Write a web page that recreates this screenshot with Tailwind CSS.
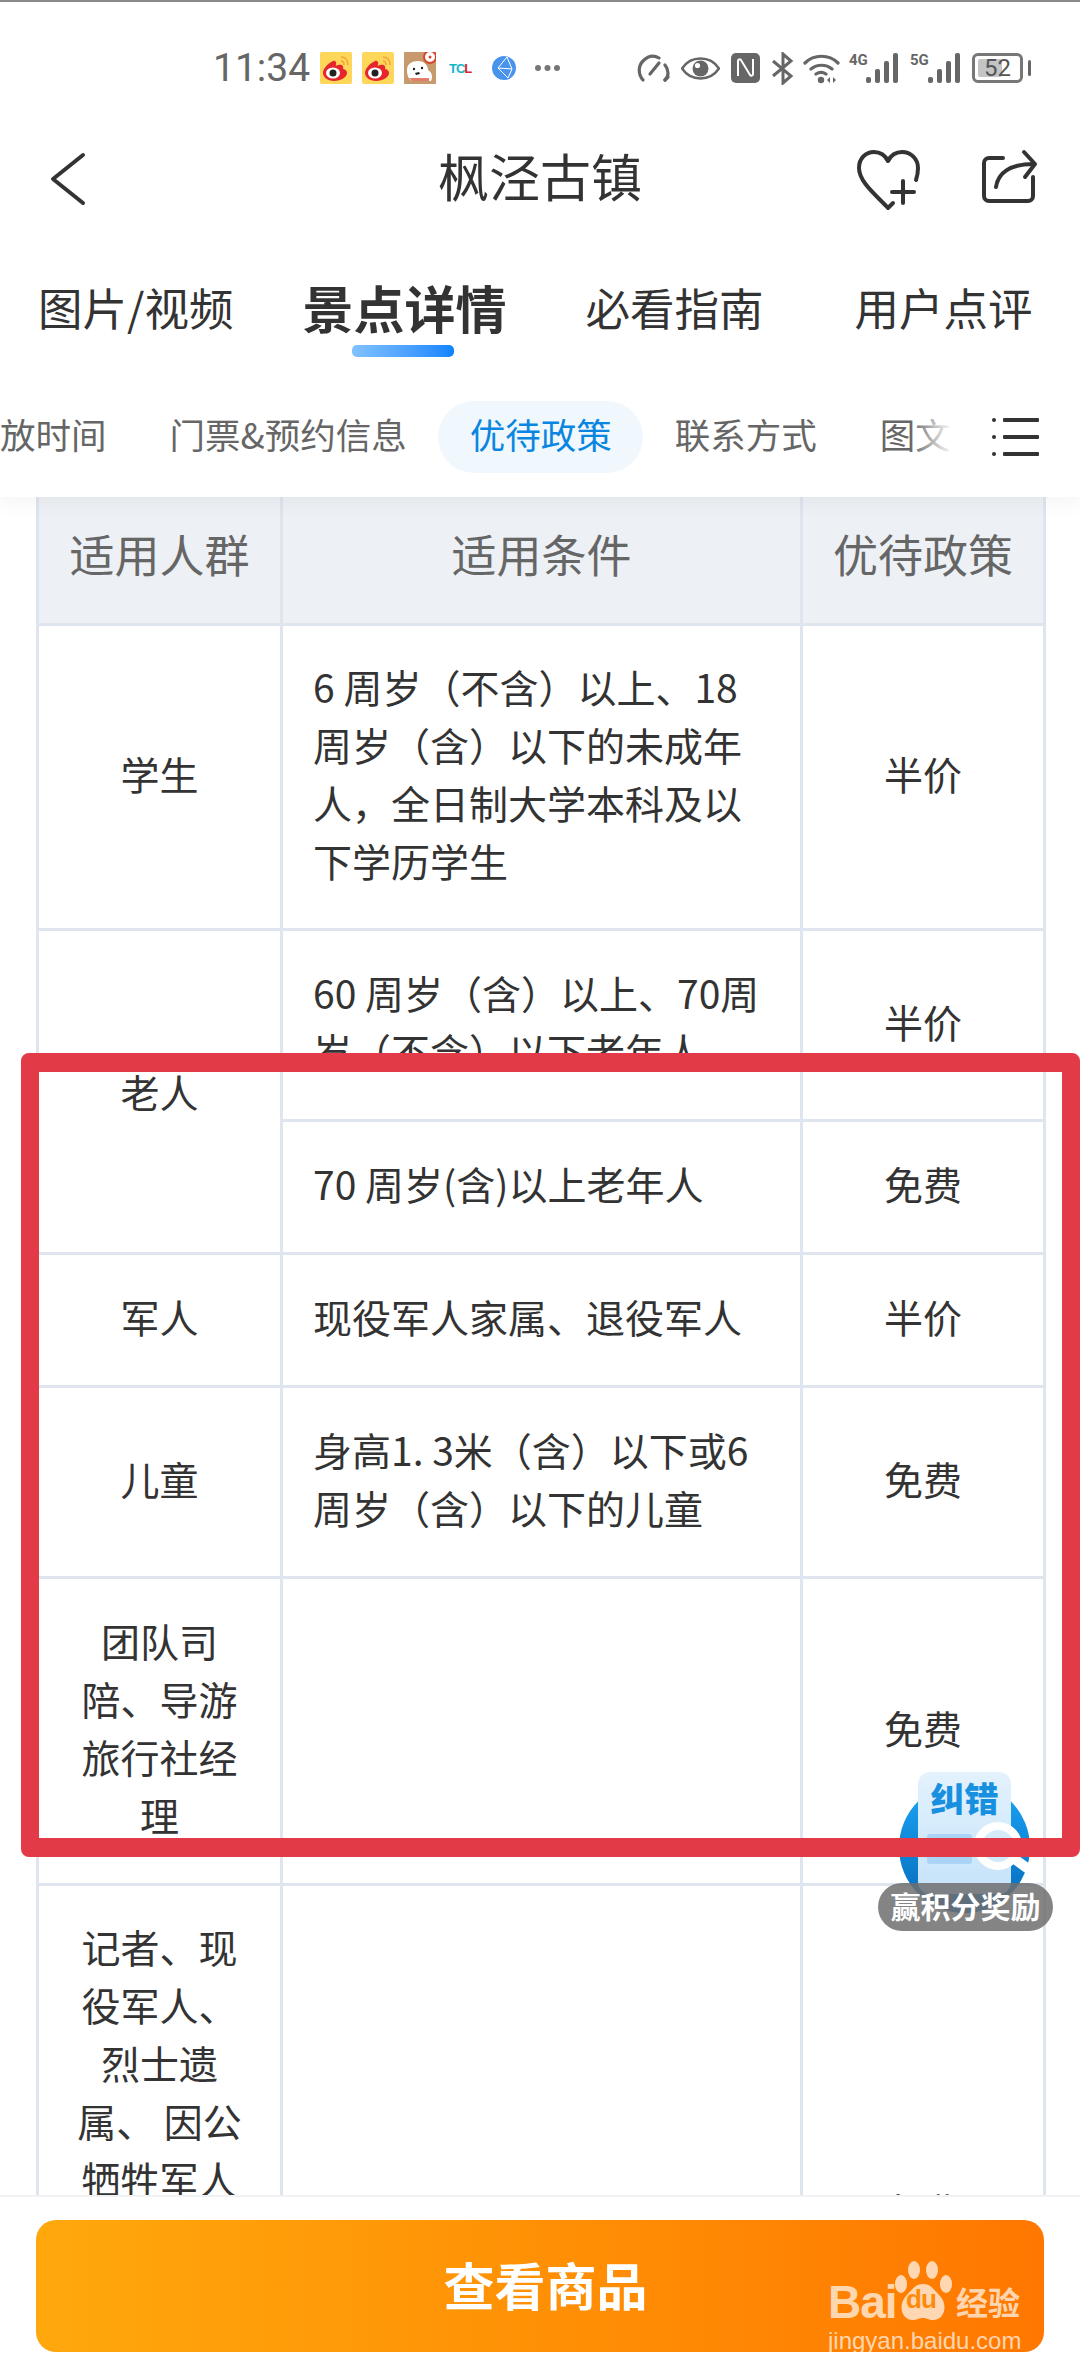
<!DOCTYPE html>
<html lang="zh-CN">
<head>
    <meta charset="UTF-8">
    <meta name="viewport" content="width=device-width, initial-scale=1.0">
    <title>枫泾古镇</title>
    <script src="https://cdn.jsdelivr.net/npm/@tailwindcss/browser@4"></script>
</head>
<body class="bg-white">
<div class="relative w-[1080px] h-[2376px] overflow-hidden flex flex-col bg-white text-[#333] font-['Noto_Sans_CJK_SC','Noto_Sans',sans-serif]">

    <!-- header -->
    <header class="relative z-10 h-[497px] shrink-0 bg-white shadow-[0_8px_18px_rgba(0,0,0,0.04)]">
        <div class="h-[2px] bg-[#8a8a8a]"></div>

        <!-- status bar -->
        <div class="h-[132px] flex items-center text-[#666]">
            <span class="ml-[213px] w-[107px] text-[39px] leading-none font-['Roboto',sans-serif]">11:34</span>
            <svg class="w-[32px] h-[32px]" viewBox="0 0 32 32"><rect width="32" height="32" rx="2" fill="#fdd65a"/><path d="M13 9C7 12 3 17 3 21c0 5 6 8 11 8 7 0 13-4 13-8 0-3-3-4-4-4 1-3-1-5-5-4-2 1-3 1-2 0 1-3-1-5-3-4z" fill="#e6262c"/><ellipse cx="13" cy="21" rx="7" ry="5.5" fill="#fff"/><circle cx="13" cy="21" r="3.5" fill="#222"/><path d="M21 5c4 0 7 3 7 8M21 9c2 0 3 2 3 4" fill="none" stroke="#f2a33a" stroke-width="1.6"/></svg>
            <svg class="ml-[10px] w-[32px] h-[32px]" viewBox="0 0 32 32"><rect width="32" height="32" rx="2" fill="#fdd65a"/><path d="M13 9C7 12 3 17 3 21c0 5 6 8 11 8 7 0 13-4 13-8 0-3-3-4-4-4 1-3-1-5-5-4-2 1-3 1-2 0 1-3-1-5-3-4z" fill="#e6262c"/><ellipse cx="13" cy="21" rx="7" ry="5.5" fill="#fff"/><circle cx="13" cy="21" r="3.5" fill="#222"/><path d="M21 5c4 0 7 3 7 8M21 9c2 0 3 2 3 4" fill="none" stroke="#f2a33a" stroke-width="1.6"/></svg>
            <svg class="ml-[10px] w-[32px] h-[32px]" viewBox="0 0 32 32"><rect width="32" height="32" fill="#c69a6c"/><circle cx="26" cy="5" r="6" fill="#fff" stroke="#d8452e" stroke-width="2"/><circle cx="26" cy="5" r="1.5" fill="#d8452e"/><path d="M3 18c0-6 5-9 11-9s10 4 10 9c4 2 5 7 3 11H8c-4-2-5-7-5-11z" fill="#fff"/><circle cx="10" cy="17" r="1.2" fill="#222"/><circle cx="18" cy="16" r="1.2" fill="#222"/><path d="M11 21l4-1 1 2-4 1z" fill="#222"/><path d="M5 26h20v3H8z" fill="#d8452e" opacity=".7"/></svg>
            <span class="ml-[13px] w-[30px] text-[13px] leading-none font-black tracking-[-1px] font-['Liberation_Sans',sans-serif] text-[#12b5c9]">TC<span class="text-[#e0202c]">L</span></span>
            <svg class="ml-[13px] w-[24px] h-[24px]" viewBox="0 0 24 24"><circle cx="12" cy="12" r="12" fill="#4a93ec"/><path d="M15 1L6 12l10 10M6 12l14 1M15 1l5 12-4 9" fill="none" stroke="#fff" stroke-width="1"/></svg>
            <svg class="ml-[19px] w-[25px] h-[6px]" viewBox="0 0 25 6"><circle cx="3" cy="3" r="3" fill="#777"/><circle cx="12.5" cy="3" r="3" fill="#777"/><circle cx="22" cy="3" r="3" fill="#777"/></svg>

            <svg class="ml-[77px] w-[33px] h-[28px]" viewBox="0 0 33 28" fill="none" stroke="#666" stroke-width="3.2" stroke-linecap="round"><path d="M6 26C1 20 1 12 6 7c5-5 11-6 16-3"/><path d="M28 11c4 5 4 11 0 15"/><path d="M13 20l9-11"/><path d="M28 26l3-3"/></svg>
            <svg class="ml-[11px] w-[39px] h-[23px]" viewBox="0 0 39 23"><path d="M1 11.5C6 4 12 1.500 19.500 1.500S33 4 38 11.500C33 19 27 21.500 19.500 21.500S6 19 1 11.500z" fill="none" stroke="#666" stroke-width="2.600"/><circle cx="19.500" cy="11.500" r="8" fill="#666"/><circle cx="16.500" cy="8.500" r="2.600" fill="#fff"/></svg>
            <svg class="ml-[11px] w-[29px] h-[30px]" viewBox="0 0 29 30"><rect width="29" height="30" rx="5" fill="#666"/><path d="M7 23V8c0-2 2-2 3-1l9 15c1 1 3 1 3-1V6" fill="none" stroke="#fff" stroke-width="2"/></svg>
            <svg class="ml-[11px] w-[24px] h-[33px]" viewBox="0 0 24 33" fill="none" stroke="#666" stroke-width="3"><path d="M2 9l18 15-8 7V2l8 7L2 24"/></svg>
            <svg class="ml-[8px] w-[37px] h-[31px]" viewBox="0 0 37 31"><path d="M2 10c9-9 24-9 33 0M8 16c6-5 15-5 21 0M13 21c3-2 7-2 10 0" fill="none" stroke="#666" stroke-width="3.200" stroke-linecap="round"/><circle cx="18" cy="27" r="3.200" fill="#666"/><path d="M27 24l-3 3 3 3zM30 24l3 3-3 3z" fill="#666"/></svg>
            <div class="relative ml-[9px] w-[49px] h-[30px]">
                <span class="absolute left-0 top-0 text-[15px] leading-none font-bold font-['Roboto',sans-serif]">4G</span>
                <svg class="absolute right-0 bottom-0 w-[32px] h-[30px]" viewBox="0 0 32 30" fill="#666"><rect x="0" y="24" width="5" height="6" rx="2"/><rect x="9" y="16" width="5" height="14" rx="2"/><rect x="18" y="8" width="5" height="22" rx="2"/><rect x="27" y="0" width="5" height="30" rx="2"/></svg>
            </div>
            <div class="relative ml-[12px] w-[50px] h-[30px]">
                <span class="absolute left-0 top-0 text-[15px] leading-none font-bold font-['Roboto',sans-serif]">5G</span>
                <svg class="absolute right-0 bottom-0 w-[32px] h-[30px]" viewBox="0 0 32 30" fill="#666"><rect x="0" y="24" width="5" height="6" rx="2"/><rect x="9" y="16" width="5" height="14" rx="2"/><rect x="18" y="8" width="5" height="22" rx="2"/><rect x="27" y="0" width="5" height="30" rx="2"/></svg>
            </div>
            <div class="relative ml-[12px] w-[51px] h-[30px] rounded-[6px] border-[3px] border-[#777] flex items-center justify-center overflow-hidden">
                <div class="absolute left-[3px] top-[3px] bottom-[3px] w-[24px] bg-[#c4c4c4] rounded-[2px]"></div>
                <span class="relative text-[24px] leading-none font-['Roboto',sans-serif] text-[#555]">52</span>
            </div>
            <div class="ml-[5px] w-[3px] h-[16px] bg-[#666] rounded-full"></div>
        </div>

        <!-- nav -->
        <div class="relative h-[88px] flex items-center justify-center">
            <svg class="absolute left-[50px] top-[18px] w-[36px] h-[54px]" viewBox="0 0 36 54" fill="none" stroke="#333" stroke-width="4" stroke-linecap="round" stroke-linejoin="round"><path d="M33 3L3 27l30 24"/></svg>
            <h1 class="text-[51px] leading-none font-normal pb-[5px]">枫泾古镇</h1>
            <svg class="absolute left-[856px] top-[15px] w-[66px] h-[62px]" viewBox="0 0 66 62" fill="none" stroke="#333" stroke-width="4" stroke-linecap="round" stroke-linejoin="round"><path d="M37 54l-5 5C20 46 3 33 3 19 3 9 10 3 18 3c6 0 11 3 14 9 3-6 8-9 14-9 9 0 16 7 16 16 0 5-1 9-2 12"/><path d="M47 32v22M36 43h22"/></svg>
            <svg class="absolute left-[981px] top-[15px] w-[58px] h-[56px]" viewBox="0 0 58 56" fill="none" stroke="#333" stroke-width="4" stroke-linecap="round" stroke-linejoin="round"><path d="M22 9H8a5 5 0 0 0-5 5v33a5 5 0 0 0 5 5h39a5 5 0 0 0 5-5V28"/><path d="M15 38c2-14 14-23 38-23"/><path d="M43 3l11 12-10 13"/></svg>
        </div>

        <!-- tabs -->
        <div class="mt-[28px] h-[120px] pb-[6px] flex items-center text-[44.5px] leading-none">
            <span class="ml-[38px]">图片/视频</span>
            <span class="relative ml-[69px] text-[51px] font-bold">景点详情
                <span class="absolute left-[50px] top-[63px] w-[102px] h-[12px] rounded-[5px] bg-gradient-to-r from-[#80c2ff] to-[#0a84ff]"></span>
            </span>
            <span class="ml-[79px]">必看指南</span>
            <span class="ml-[91px]">用户点评</span>
        </div>

        <!-- sub tabs -->
        <div class="relative mt-[31px] h-[72px] flex items-center text-[35.5px] leading-none text-[#666] whitespace-nowrap overflow-hidden">
            <span class="-ml-[31.5px] px-[31.5px] pb-[6px]">放时间</span>
            <span class="px-[31.5px] pb-[6px]">门票&amp;预约信息</span>
            <span class="h-[72px] px-[31.5px] pb-[6px] flex items-center rounded-[36px] bg-[#f0f7fd] text-[#0a86e0]">优待政策</span>
            <span class="px-[31.5px] pb-[6px]">联系方式</span>
            <span class="px-[31.5px] pb-[6px]">图文</span>
            <div class="absolute right-0 top-0 h-[72px] w-[170px] flex items-center justify-end bg-gradient-to-r from-white/0 via-white via-[25%] to-white pr-[42px]">
                <svg class="w-[48px] h-[40px] translate-x-[2px]" viewBox="0 0 48 40" fill="#333"><circle cx="2" cy="3" r="2"/><circle cx="2" cy="20" r="2"/><circle cx="2" cy="37" r="2"/><rect x="11" y="1" width="36" height="4" rx="1"/><rect x="11" y="18" width="36" height="4" rx="1"/><rect x="11" y="35" width="36" height="4" rx="1"/></svg>
            </div>
        </div>
    </header>

    <!-- table -->
    <main class="flex-1 min-h-0 overflow-hidden">
        <table class="ml-[36px] w-[1007px] table-fixed border-collapse text-[39px] leading-[58px] text-center">
            <colgroup>
                <col class="w-[244px]">
                <col class="w-[520px]">
                <col class="w-[243px]">
            </colgroup>
            <thead>
                <tr class="h-[127px] bg-[#edf1f6] text-[#666] text-[45px]">
                    <th class="pb-[12px] font-normal border-x-[3px] border-[#dfe5ee]">适用人群</th>
                    <th class="pb-[12px] font-normal border-x-[3px] border-[#dfe5ee]">适用条件</th>
                    <th class="pb-[12px] font-normal border-x-[3px] border-[#dfe5ee]">优待政策</th>
                </tr>
            </thead>
            <tbody>
                <tr class="h-[305px]">
                    <td class="border-[3px] border-[#dfe5ee] px-[32px] pb-[8px]">学生</td>
                    <td class="border-[3px] border-[#dfe5ee] pl-[30px] pb-[8px] text-left">6 周岁（不含）以上、18<br>周岁（含）以下的未成年<br>人，全日制大学本科及以<br>下学历学生</td>
                    <td class="border-[3px] border-[#dfe5ee] px-[32px] pb-[8px]">半价</td>
                </tr>
                <tr class="h-[191px]">
                    <td rowspan="2" class="border-[3px] border-[#dfe5ee] px-[32px]">老人</td>
                    <td class="border-[3px] border-[#dfe5ee] pl-[30px] pb-[8px] text-left">60 周岁（含）以上、70周<br>岁（不含）以下老年人</td>
                    <td class="border-[3px] border-[#dfe5ee] px-[32px] pb-[8px]">半价</td>
                </tr>
                <tr class="h-[133px]">
                    <td class="border-[3px] border-[#dfe5ee] pl-[30px] pb-[8px] text-left">70 周岁(含)以上老年人</td>
                    <td class="border-[3px] border-[#dfe5ee] px-[32px] pb-[8px]">免费</td>
                </tr>
                <tr class="h-[133px]">
                    <td class="border-[3px] border-[#dfe5ee] px-[32px] pb-[8px]">军人</td>
                    <td class="border-[3px] border-[#dfe5ee] pl-[30px] pb-[8px] text-left">现役军人家属、退役军人</td>
                    <td class="border-[3px] border-[#dfe5ee] px-[32px] pb-[8px]">半价</td>
                </tr>
                <tr class="h-[191px]">
                    <td class="border-[3px] border-[#dfe5ee] px-[32px] pb-[8px]">儿童</td>
                    <td class="border-[3px] border-[#dfe5ee] pl-[30px] pb-[8px] text-left">身高1. 3米（含）以下或6<br>周岁（含）以下的儿童</td>
                    <td class="border-[3px] border-[#dfe5ee] px-[32px] pb-[8px]">免费</td>
                </tr>
                <tr class="h-[307px]">
                    <td class="border-[3px] border-[#dfe5ee] px-[20px] pb-[8px]">团队司<br>陪、导游<br>旅行社经<br>理</td>
                    <td class="border-[3px] border-[#dfe5ee] px-[32px]"></td>
                    <td class="border-[3px] border-[#dfe5ee] px-[32px] pb-[8px]">免费</td>
                </tr>
                <tr class="h-[652px]">
                    <td class="border-[3px] border-[#dfe5ee] px-[20px] pt-[31px] align-top">记者、现<br>役军人、<br>烈士遗<br>属、 因公<br>牺牲军人</td>
                    <td class="border-[3px] border-[#dfe5ee] px-[32px]"></td>
                    <td class="border-[3px] border-[#dfe5ee] px-[32px]">免费</td>
                </tr>
            </tbody>
        </table>
    </main>

    <!-- bottom bar -->
    <footer class="relative z-10 h-[181px] shrink-0 bg-white border-t-[2px] border-[#f1f2f4] pt-[23px]">
        <button class="ml-[36px] w-[1008px] h-[132px] pl-[11px] pb-[4px] rounded-[20px] bg-gradient-to-r from-[#ffa80c] to-[#ff7700] text-white text-[51px] font-bold leading-none">查看商品</button>
    </footer>

    <!-- floating feedback badge -->
    <div class="absolute z-20 left-[878px] top-[1772px] w-[175px] h-[160px]">
        <div class="absolute left-[21px] top-[10px] w-[131px] h-[131px] rounded-full bg-gradient-to-b from-[#1ca6f8] to-[#0669b8]"></div>
        <div class="absolute left-[40px] top-0 w-[93px] h-[122px] rounded-[12px] bg-gradient-to-b from-[#e3f2fd] to-[#c5e3fa] text-[#1890e0] text-[34px] font-black leading-none text-center pt-[9px]">纠错</div>
        <div class="absolute left-[49px] top-[62px] w-[45px] h-[30px] bg-[#a9d4f5] rounded-[3px]"></div>
        <svg class="absolute left-[94px] top-[48px] w-[72px] h-[64px]" viewBox="0 0 72 64" fill="none" stroke="#fff"><circle cx="26" cy="26" r="20" stroke-width="8" fill="#d4ecfc" fill-opacity=".6"/><path d="M44 40l22 16" stroke-width="10" stroke-linecap="round"/></svg>
        <div class="absolute left-0 top-[111px] w-[175px] h-[48px] rounded-[24px] bg-[#6e6e6e]/85 text-white text-[30px] font-bold leading-[44px] text-center">赢积分奖励</div>
    </div>

    <!-- red annotation -->
    <div class="absolute z-30 left-[21px] right-0 top-[1053px] h-[804px] border-x-[18px] border-y-[19px] border-[#e33a47] rounded-[8px]"></div>

    <!-- watermark -->
    <div class="absolute z-40 left-[828px] top-[2260px] w-[196px] text-white/70">
        <div class="relative h-[62px]">
            <span class="absolute left-0 bottom-0 text-[46px] leading-[40px] font-bold font-['Liberation_Sans',sans-serif] tracking-[-1px]">Bai</span>
            <svg class="absolute left-[66px] top-0 w-[60px] h-[62px]" viewBox="0 0 60 62" fill="currentColor"><ellipse cx="20" cy="10" rx="6" ry="9"/><ellipse cx="38" cy="10" rx="6" ry="9"/><ellipse cx="7" cy="24" rx="6" ry="9"/><ellipse cx="52" cy="24" rx="6" ry="9"/><path d="M29 24c8 0 11 6 17 12 8 8 5 24-7 24-5 0-6-2-10-2s-6 2-10 2C7 60 4 45 12 36c6-6 9-12 17-12z"/></svg>
            <span class="absolute left-[78px] bottom-[10px] text-[26px] leading-none font-bold font-['Liberation_Sans',sans-serif] tracking-[-1px] text-[#ff8a0a]">du</span>
            <span class="absolute right-[4px] bottom-[2px] text-[32px] leading-[38px] font-bold">经验</span>
        </div>
        <div class="mt-[6px] text-[24px] leading-[26px] whitespace-nowrap font-['Liberation_Sans',sans-serif]">jingyan.baidu.com</div>
    </div>
</div>
</body>
</html>
